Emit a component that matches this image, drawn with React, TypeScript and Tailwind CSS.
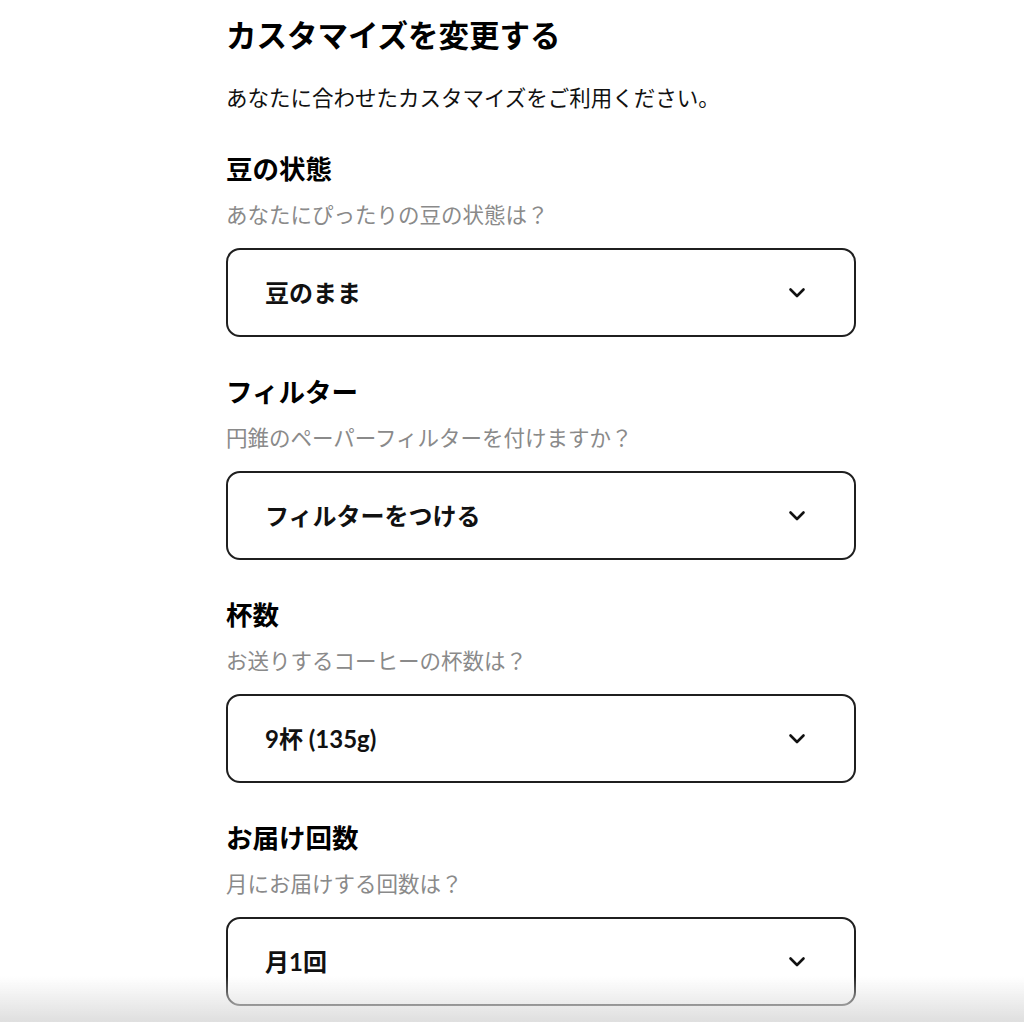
const font = { fontFamily: '"Inter", "Noto Sans CJK JP", sans-serif' };
const valueFont = { fontFamily: '"Lato", "Noto Sans CJK JP", sans-serif' };

const sections = [
  { title: "豆の状態", desc: "あなたにぴったりの豆の状態は？", value: "豆のまま" },
  { title: "フィルター", desc: "円錐のペーパーフィルターを付けますか？", value: "フィルターをつける" },
  { title: "杯数", desc: "お送りするコーヒーの杯数は？", value: "9杯 (135g)" },
  { title: "お届け回数", desc: "月にお届けする回数は？", value: "月1回" },
];

function Chevron() {
  return (
    <svg width="18" height="11" viewBox="0 0 18 11" fill="none">
      <path d="M2.5 2.5l6.5 6.5 6.5-6.5" stroke="#111" strokeWidth="2.6" strokeLinecap="round" strokeLinejoin="round" />
    </svg>
  );
}

function SelectBox({ value }: { value: string }) {
  return (
    <div className="flex h-[89px] items-center justify-between rounded-[14px] border-2 border-[#1f1f1f] bg-white pl-[37px] pr-[48px]">
      <span className="text-[24px] font-bold text-[#111]" style={valueFont}>
        {value}
      </span>
      <Chevron />
    </div>
  );
}

export default function App() {
  return (
    <div className="relative min-h-screen bg-white text-black" style={font}>
      <div className="w-[856px] pl-[226px] pt-[14px] pb-[40px]">
        <h1 className="text-[30.5px] font-bold leading-[44px]">カスタマイズを変更する</h1>
        <p className="mt-[24px] text-[21.5px] leading-[32px] text-[#111]">
          あなたに合わせたカスタマイズをご利用ください。
        </p>

        <div className="mt-[37px] flex flex-col gap-[37px]">
          {sections.map((s) => (
            <section key={s.title}>
              <h2 className="text-[26.5px] font-bold leading-[36px]">{s.title}</h2>
              <p className="mt-[14px] text-[21.5px] leading-[28px] text-[#8a8a8a]">{s.desc}</p>
              <div className="mt-[19px]">
                <SelectBox value={s.value} />
              </div>
            </section>
          ))}
        </div>
      </div>

      <div className="pointer-events-none fixed inset-x-0 bottom-0 h-[46px] bg-gradient-to-b from-white/0 to-[#dfdfdf]" />
    </div>
  );
}
